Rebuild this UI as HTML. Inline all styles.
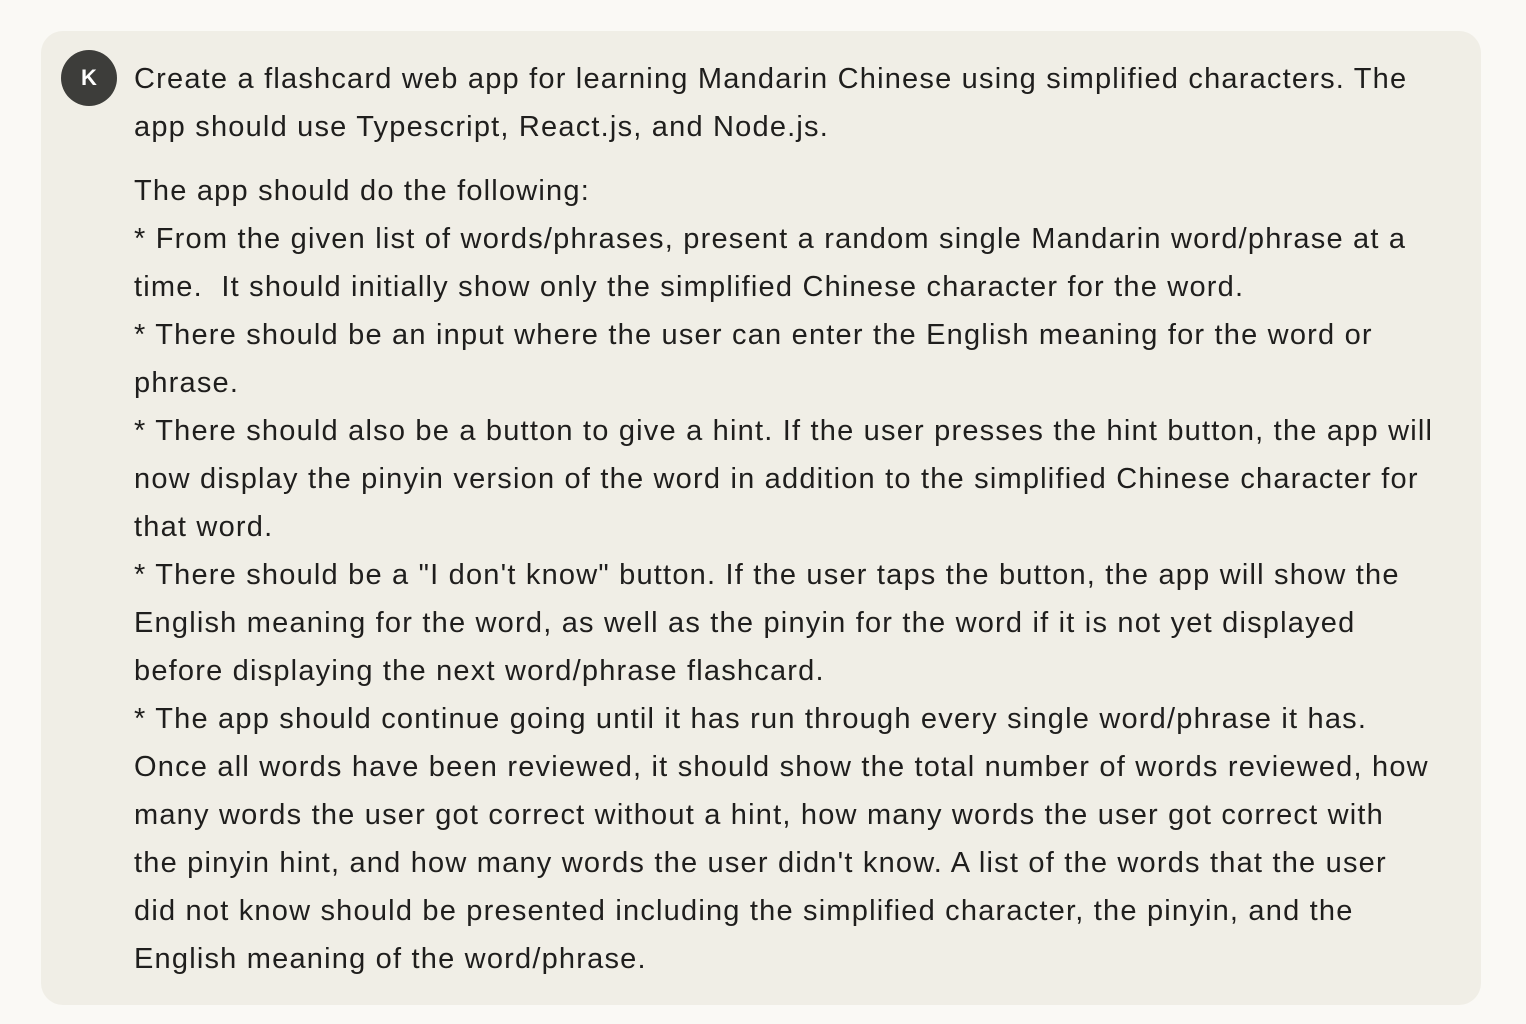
<!DOCTYPE html>
<html><head><meta charset="utf-8"><style>
html,body{margin:0;padding:0;background:#faf9f5;width:1526px;height:1024px;overflow:hidden}
.card{position:absolute;left:41px;top:31px;width:1440px;height:974px;background:#f0eee6;border-radius:22px}
.av{position:absolute;left:61px;top:50px;width:56px;height:56px;border-radius:50%;background:#3d3d3a;color:#fff;font:bold 22px/56px "Liberation Sans",sans-serif;text-align:center}
.t{position:absolute;left:134px;font-family:"Liberation Sans",sans-serif;font-size:29px;letter-spacing:1.2px;color:#1f1e1d;white-space:nowrap}
.t div{height:48px;line-height:48px;white-space:pre}
</style></head><body>
<div class="card"></div>
<div class="av">K</div>
<div class="t" style="top:55px"><div>Create a flashcard web app for learning Mandarin Chinese using simplified characters. The</div><div>app should use Typescript, React.js, and Node.js.</div></div>
<div class="t" style="top:167px"><div>The app should do the following:</div><div>* From the given list of words/phrases, present a random single Mandarin word/phrase at a</div><div>time.  It should initially show only the simplified Chinese character for the word.</div><div>* There should be an input where the user can enter the English meaning for the word or</div><div>phrase.</div><div>* There should also be a button to give a hint. If the user presses the hint button, the app will</div><div>now display the pinyin version of the word in addition to the simplified Chinese character for</div><div>that word.</div><div>* There should be a "I don't know" button. If the user taps the button, the app will show the</div><div>English meaning for the word, as well as the pinyin for the word if it is not yet displayed</div><div>before displaying the next word/phrase flashcard.</div><div>* The app should continue going until it has run through every single word/phrase it has.</div><div>Once all words have been reviewed, it should show the total number of words reviewed, how</div><div>many words the user got correct without a hint, how many words the user got correct with</div><div>the pinyin hint, and how many words the user didn't know. A list of the words that the user</div><div>did not know should be presented including the simplified character, the pinyin, and the</div><div>English meaning of the word/phrase.</div></div>
</body></html>
